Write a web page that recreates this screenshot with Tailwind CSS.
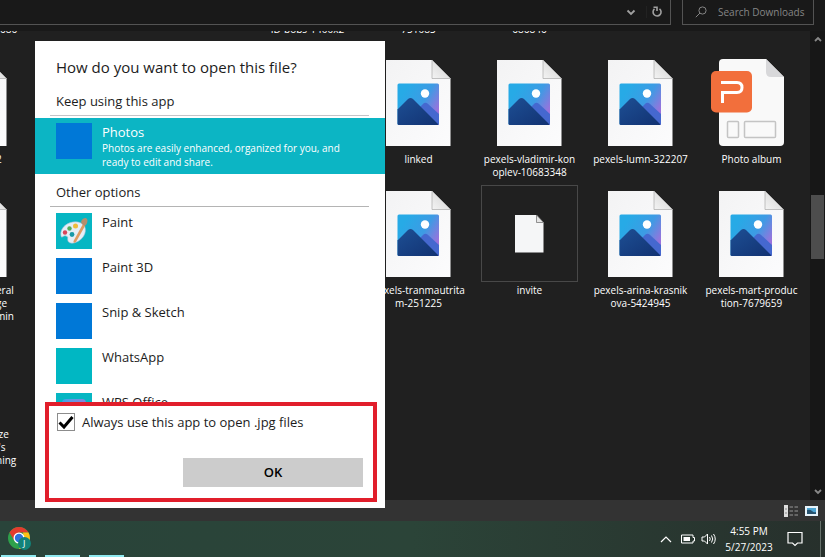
<!doctype html>
<html lang="en">
  <head>
    <meta charset="utf-8">
    <title>Downloads</title>
    <script src="https://cdn.jsdelivr.net/npm/@tailwindcss/browser@4"></script>
  </head>
  <body class="relative flex flex-col h-screen overflow-hidden bg-[#202020] text-white font-['Open_Sans',sans-serif]">
    <!-- Shared icons -->
    <svg class="absolute h-0 w-0" aria-hidden="true">
      <defs>
        <linearGradient id="sky" x1="0" y1="0" x2="1" y2="0.6">
          <stop offset="0.2" stop-color="#27aae6" />
          <stop offset="0.65" stop-color="#3d9be4" />
          <stop offset="1" stop-color="#9a72dc" />
        </linearGradient>
        <linearGradient id="hill" x1="0" y1="0" x2="1" y2="1">
          <stop offset="0" stop-color="#1d4f94" />
          <stop offset="1" stop-color="#123272" />
        </linearGradient>
        <linearGradient id="paper" x1="0" y1="0" x2="1" y2="1">
          <stop offset="0" stop-color="#f3f3f4" />
          <stop offset="1" stop-color="#fcfcfd" />
        </linearGradient>
        <linearGradient id="fold" x1="0" y1="1" x2="1" y2="0">
          <stop offset="0" stop-color="#f4f4f4" />
          <stop offset="1" stop-color="#cfcfcf" />
        </linearGradient>
      </defs>
      <symbol id="picture" viewBox="0 0 65 86">
        <path d="M0 0H46L64.500 18.500V86H0Z" fill="url(#paper)" />
        <path d="M46 0V18.500H64.500Z" fill="url(#fold)" stroke="#a9a9a9" stroke-width="0.700" />
        <rect x="11.500" y="23.500" width="41.500" height="41.500" rx="1.500" fill="url(#sky)" />
        <path d="M31 50L37.500 43.500Q39.500 42 41.500 43.500L53 54V63.500Q53 65 51.500 65H40Z" fill="#4568cf" />
        <path d="M11.500 49.500L22 39Q24.500 37 27 39L52.500 64.500L51.500 65H13Q11.500 65 11.500 63.500Z" fill="url(#hill)" />
        <circle cx="39" cy="33.500" r="4.200" fill="#fff" />
      </symbol>
      <symbol id="blank" viewBox="0 0 29 38">
        <path d="M0 0H21.500L28.500 7.500V37.500H0Z" fill="#f5f6f7" />
        <path d="M21.500 0V7.500H28.500Z" fill="#e5e5e5" stroke="#777" stroke-width="0.800" />
      </symbol>
      <symbol id="slides" viewBox="0 0 76 88">
        <path d="M13 0H56L74 18V83Q74 87 70 87H13Q9 87 9 83V4Q9 0 13 0Z" fill="#f9f9f9" />
        <path d="M56 0V13Q56 18 61 18H74Z" fill="#d8d8da" />
        <rect x="1" y="12" width="41" height="41.500" rx="5" fill="#f26f3c" />
        <path d="M11 23.500H27Q32 23.500 32 28.500T27 33.500H12.500V44" fill="none" stroke="#fff" stroke-width="3" />
        <g fill="none" stroke="#c4c4c4" stroke-width="1.500">
          <rect x="17.500" y="62.500" width="11" height="16" rx="1" />
          <rect x="34.500" y="62.500" width="31" height="16" rx="1" />
        </g>
      </symbol>
    </svg>

    <!-- Address bar and search -->
    <header class="flex h-[31px] shrink-0 items-start gap-[11px] bg-[#191919] pr-[11px]">
      <div class="flex h-[25px] flex-1 items-center justify-end border-r border-b border-[#535353] pr-[7px]">
        <button aria-label="Previous locations" class="flex w-6 justify-center border-r border-[#222] pr-2">
          <svg class="h-3 w-3" viewBox="0 0 12 12" fill="none" stroke="#a0a0a0" stroke-width="1.800"><path d="M2.500 4.500L6 8L9.500 4.500" /></svg>
        </button>
        <button aria-label="Refresh" class="ml-1 flex w-3">
          <svg class="h-3 w-3" viewBox="0 0 12 12" fill="none" stroke="#a0a0a0" stroke-width="1.600"><path d="M8.500 2.800A4 4 0 1 1 3.500 2.900M2.500 1.300H6V5" /></svg>
        </button>
      </div>
      <label class="flex h-[25px] w-[132px] items-center gap-[11px] border-x border-b border-[#535353] pl-3">
        <svg class="h-3 w-3 shrink-0" viewBox="0 0 12 12" fill="none" stroke="#858585"><circle cx="7.500" cy="4.500" r="3.600" /><path d="M5 7L0.800 11.200" /></svg>
        <input type="text" aria-label="Search Downloads" placeholder="Search Downloads" class="h-4 w-full min-w-0 text-[10px] placeholder:text-[#858585] outline-none">
      </label>
    </header>

    <!-- Files -->
    <main class="flex min-h-0 flex-1 overflow-hidden text-[10px] leading-[13px]">
      <!-- Left column, scrolled mostly out of view -->
      <div class="w-[30px] shrink-0 overflow-hidden">
        <div class="flex h-[2px] items-end overflow-hidden"><span class="-mb-[3px]">686</span></div>
        <div class="mt-[21px] h-[131px]">
          <div class="flex h-[97px] w-[7px] items-center justify-end"><svg class="h-[86px] w-[65px] shrink-0"><use href="#picture" /></svg></div>
          <p class="-ml-1 pt-[2px]">2</p>
        </div>
        <div class="h-[131px]">
          <div class="flex h-[97px] w-[7px] items-center justify-end"><svg class="h-[86px] w-[65px] shrink-0"><use href="#picture" /></svg></div>
          <p class="-ml-1 pt-[2px]">eral<br>ge<br>min</p>
        </div>
        <p class="-ml-1 pt-28">ize<br>l's<br>ning</p>
      </div>

      <div class="flex min-w-0 flex-1 flex-col items-end pr-[3px]">
        <div class="grid h-[2px] grid-cols-[repeat(5,111px)] grid-rows-[2px] items-end overflow-hidden text-center">
          <span class="-mb-[3px]">ID-pops-1400x2</span>
          <span class="-mb-[3px]">751083</span>
          <span class="-mb-[3px]">686846</span>
        </div>
        <div class="mt-[21px] grid auto-rows-[131px] grid-cols-[repeat(4,111px)] text-center">
          <figure class="flex flex-col items-center">
            <div class="flex h-[97px] w-[97px] items-center justify-center"><svg class="h-[86px] w-[65px]"><use href="#picture" /></svg></div>
            <figcaption class="pt-[2px]">linked</figcaption>
          </figure>
          <figure class="flex flex-col items-center">
            <div class="flex h-[97px] w-[97px] items-center justify-center"><svg class="h-[86px] w-[65px]"><use href="#picture" /></svg></div>
            <figcaption class="pt-[2px]">pexels-vladimir-kon<br>oplev-10683348</figcaption>
          </figure>
          <figure class="flex flex-col items-center">
            <div class="flex h-[97px] w-[97px] items-center justify-center"><svg class="h-[86px] w-[65px]"><use href="#picture" /></svg></div>
            <figcaption class="pt-[2px]">pexels-lumn-322207</figcaption>
          </figure>
          <figure class="flex flex-col items-center">
            <div class="flex h-[97px] w-[97px] items-center justify-start pl-[7px]"><svg class="h-[88px] w-[76px]"><use href="#slides" /></svg></div>
            <figcaption class="pt-[2px]">Photo album</figcaption>
          </figure>
          <figure class="flex flex-col items-center">
            <div class="flex h-[97px] w-[97px] items-center justify-center"><svg class="h-[86px] w-[65px]"><use href="#picture" /></svg></div>
            <figcaption class="pt-[2px]">pexels-tranmautrita<br>m-251225</figcaption>
          </figure>
          <figure class="flex flex-col items-center">
            <div class="flex h-[97px] w-[97px] items-center justify-center border border-[#484848]"><svg class="h-[38px] w-[29px]"><use href="#blank" /></svg></div>
            <figcaption class="pt-[2px]">invite</figcaption>
          </figure>
          <figure class="flex flex-col items-center">
            <div class="flex h-[97px] w-[97px] items-center justify-center"><svg class="h-[86px] w-[65px]"><use href="#picture" /></svg></div>
            <figcaption class="pt-[2px]">pexels-arina-krasnik<br>ova-5424945</figcaption>
          </figure>
          <figure class="flex flex-col items-center">
            <div class="flex h-[97px] w-[97px] items-center justify-center"><svg class="h-[86px] w-[65px]"><use href="#picture" /></svg></div>
            <figcaption class="pt-[2px]">pexels-mart-produc<br>tion-7679659</figcaption>
          </figure>
        </div>
      </div>

      <!-- Scroll bar -->
      <div class="flex w-[15px] shrink-0 flex-col items-center bg-[#171717] py-[3px]">
        <svg class="h-[10px] w-[10px]" viewBox="0 0 10 10" fill="none" stroke="#888" stroke-width="1.800"><path d="M2 7L5 4L8 7" /></svg>
        <div class="mt-[151px] h-16 w-[13px] bg-[#4d4d4d]"></div>
        <svg class="mt-auto h-[10px] w-[10px]" viewBox="0 0 10 10" fill="none" stroke="#888" stroke-width="1.800"><path d="M2 3L5 6L8 3" /></svg>
      </div>
    </main>

    <!-- View switcher -->
    <div class="flex h-[21px] shrink-0 items-center justify-end gap-[7px] bg-[#333] pr-[7px]">
      <button aria-label="Details view">
        <svg class="h-3 w-[14px]" viewBox="0 0 14 12"><path d="M0 0H4V12H0Z" fill="#ddd" /><path d="M1 4H3M1 8H3" stroke="#888" /><path d="M5.500 2H9M10.500 2H14M5.500 6H9M10.500 6H14M5.500 10H9M10.500 10H14" stroke="#999" /></svg>
      </button>
      <button aria-label="Large thumbnails">
        <svg class="h-[10px] w-[13px]" viewBox="0 0 13 10"><path d="M0 0H13V10H0Z" fill="#e8f4fb" /><path d="M2 2H11V8H2Z" fill="#4fa6d4" /><path d="M2 4Q5 3 7 5T11 6V8H2Z" fill="#27536f" /></svg>
      </button>
    </div>

    <!-- Taskbar -->
    <footer class="flex h-9 shrink-0 items-stretch justify-between bg-linear-to-r from-[#29443a] via-[#2b4438] to-[#27302c]">
      <div class="flex gap-[9px] pl-px">
        <button aria-label="Chrome" class="flex w-[35px] items-center justify-center border-b-2 border-[#8feaf0]">
          <svg class="h-6 w-6" viewBox="0 0 24 24">
            <circle cx="12" cy="12" r="11" fill="#2ea04b" />
            <path d="M2.500 6.500A11 11 0 0 1 21.500 6.500H12L7.200 14.500Z" fill="#e33b2e" />
            <path d="M21.500 6.500A11 11 0 0 1 12 23L17 14.500L16 6.500Z" fill="#fbc116" />
            <circle cx="12" cy="12" r="5.500" fill="#fff" />
            <circle cx="12" cy="12" r="4.200" fill="#2f72de" />
            <circle cx="17.500" cy="17.500" r="6.500" fill="#128279" />
            <text x="16" y="21" font-size="9" fill="#fff">J</text>
          </svg>
        </button>
        <div class="w-[35px] border-b-2 border-[#8feaf0]"></div>
        <div class="w-[35px] border-b-2 border-[#8feaf0]"></div>
      </div>
      <div class="flex items-center">
        <button aria-label="Show hidden icons"><svg class="h-3 w-3" viewBox="0 0 12 12" fill="none" stroke="#fff" stroke-width="1.200"><path d="M1 9L6 4L11 9" /></svg></button>
        <button aria-label="Battery" class="ml-[9px]"><svg class="h-3 w-[14px]" viewBox="0 0 14 12"><path d="M0.500 2H12V4.500H13.500V8H12V10H0.500Z" fill="none" stroke="#fff" /><path d="M2.500 4H9V8H2.500Z" fill="#fff" /></svg></button>
        <button aria-label="Volume" class="ml-[6px]"><svg class="h-4 w-4" viewBox="0 0 16 16" fill="none" stroke="#fff"><path d="M1 6H3.500L6.500 3V13L3.500 10H1ZM8.500 6Q10 8 8.500 10M10.500 4.500Q13 8 10.500 11.500M12.500 3Q16 8 12.500 13" /></svg></button>
        <div class="ml-2 w-12 text-center text-[10px] leading-4 whitespace-nowrap">
          <p>4:55 PM</p>
          <p>5/27/2023</p>
        </div>
        <button aria-label="Notifications" class="ml-[14px]"><svg class="h-4 w-4" viewBox="0 0 16 16" fill="none" stroke="#fff" stroke-width="1.200"><path d="M1 1.500H15V12H10.500L8 14.500L5.500 12H1Z" /></svg></button>
        <div class="ml-[17px] mr-1 h-9 w-px bg-[#66716b]"></div>
      </div>
    </footer>

    <!-- Open with dialog -->
    <section role="dialog" aria-labelledby="dialogTitle" class="absolute left-[35px] top-[41px] flex h-[467px] w-[350px] flex-col bg-white text-[13px] text-[#1c1c1c]">
      <h1 id="dialogTitle" class="pt-4 pl-[21px] text-[15px] leading-5">How do you want to open this file?</h1>
      <h2 class="mt-[15px] mr-4 ml-[15px] h-[24px] border-b border-[#c4c4c8] pl-[6px] leading-[18px]">Keep using this app</h2>
      <button class="mt-[2px] flex h-14 items-start bg-[#0cb5c4] pt-[5px] pl-[21px] text-left text-white">
        <span class="h-9 w-9 shrink-0 bg-[#0078d7]"></span>
        <span class="ml-[10px]">
          <span class="block leading-[18px]">Photos</span>
          <span class="block text-[10px] leading-[14px]">Photos are easily enhanced, organized for you, and<br>ready to edit and share.</span>
        </span>
      </button>
      <h2 class="mt-[9px] mr-4 ml-[15px] h-6 shrink-0 border-b border-[#b4b4b4] pl-[6px] leading-[18px]">Other options</h2>
      <div class="flex min-h-0 flex-1 flex-col gap-[9px] overflow-hidden pt-[6px] pl-[21px] leading-[18px]">
        <button class="flex shrink-0 items-start gap-[10px]">
          <svg class="h-9 w-9 bg-[#06b6c3]" viewBox="0 0 36 36">
            <path d="M5 23C3 13 16 6 25 10C32 13 30 23 24 27C19 31 13 31 12 28C11 25 13 24 10 23C7 22 6 26 5 23Z" fill="#e5eef7" stroke="#a4bfd5" stroke-width="0.600" />
            <circle cx="9" cy="19.500" r="2.200" fill="#d9455a" />
            <circle cx="13.500" cy="15.500" r="2.200" fill="#55ad58" />
            <circle cx="19.500" cy="13" r="2.500" fill="#efbd3c" />
            <circle cx="16" cy="21.500" r="2.400" fill="#1899a8" />
            <path d="M27 11L29 13L20 29Q17 31 17.500 28Z" fill="#e09b61" />
            <path d="M25 9Q26 5 30 5Q33 7 30 12L28.500 13L26 11Z" fill="#b58e6d" />
          </svg>
          <span>Paint</span>
        </button>
        <button class="flex shrink-0 items-start gap-[10px]"><span class="h-9 w-9 bg-[#0078d7]"></span><span>Paint 3D</span></button>
        <button class="flex shrink-0 items-start gap-[10px]"><span class="h-9 w-9 bg-[#0078d7]"></span><span>Snip &amp; Sketch</span></button>
        <button class="flex shrink-0 items-start gap-[10px]"><span class="h-9 w-9 bg-[#00b7c3]"></span><span>WhatsApp</span></button>
        <button class="flex shrink-0 items-start gap-[10px]">
          <span class="h-9 w-9 bg-[#06b6c3] p-[6px]"><span class="block h-6 rounded bg-linear-to-r from-[#35a5e8] to-[#8583dc]"></span></span>
          <span>WPS Office</span>
        </button>
      </div>
      <!-- Highlighted confirmation area -->
      <div class="mr-2 mb-[6px] ml-[10px] flex h-[100px] shrink-0 flex-col border-4 border-[#e11e2b] pt-[7px] pr-[10px] pl-2">
        <label class="flex items-center gap-[7px]">
          <span class="relative flex h-[18px] w-[18px]">
            <input type="checkbox" checked class="peer h-[18px] w-[18px] appearance-none border border-[#8c8c8c] bg-white">
            <svg class="pointer-events-none absolute inset-0 hidden h-[18px] w-[18px] peer-checked:block" viewBox="0 0 18 18" fill="none" stroke="#000" stroke-width="3"><path d="M2.500 9.500L7 14L15.500 4" /></svg>
          </span>
          <span class="leading-[18px]">Always use this app to open .jpg files</span>
        </label>
        <button class="mt-[27px] h-[29px] w-[180px] self-end bg-[#ccc] font-semibold text-black">OK</button>
      </div>
    </section>
  </body>
</html>
